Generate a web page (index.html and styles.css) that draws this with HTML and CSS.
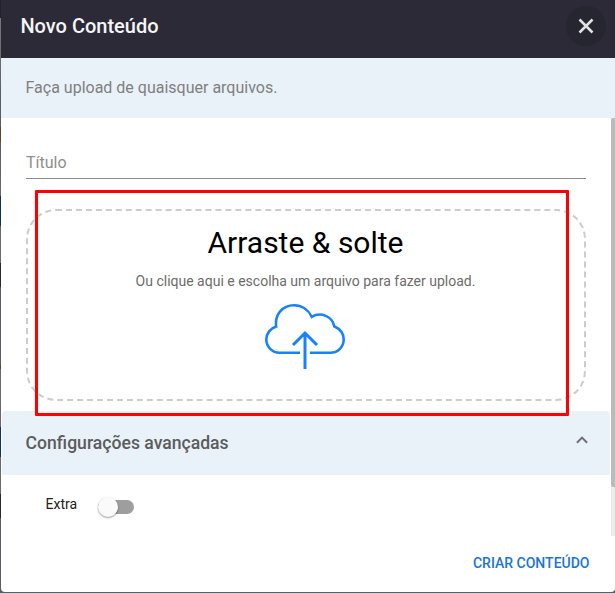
FILE: index.html
```html
<!DOCTYPE html>
<html lang="pt-BR">
<head>
<meta charset="UTF-8">
<meta name="viewport" content="width=device-width, initial-scale=1.0">
<title>Novo Conteúdo</title>
<link rel="stylesheet" href="styles.css">
</head>
<body>
<div class="dialog">
    <header class="dialog-header">
        <h1>Novo Conteúdo</h1>
        <button class="close-button" aria-label="Fechar">
            <svg width="24" height="24" viewBox="0 0 24 24"><path d="M5.500 5.500L18.500 18.500M18.500 5.500L5.500 18.500" fill="none" stroke="#e3e3e4" stroke-width="2.5"/></svg>
        </button>
    </header>
    <p class="subtitle">Faça upload de quaisquer arquivos.</p>

    <div class="dialog-body">
        <div class="content">
            <input class="title-input" type="text" placeholder="Título">
            <div class="upload">
                <div class="dropzone">
                    <h2>Arraste &amp; solte</h2>
                    <p>Ou clique aqui e escolha um arquivo para fazer upload.</p>
                    <svg class="cloud" width="80" height="66" viewBox="0 0 80 66" fill="none" stroke="#1881fd">
                        <path d="M35 48.700H14.500C7.200 48.700 1.300 42.700 1.300 35.500C1.300 29.300 5.500 24.300 11.200 22.600C9.500 10.500 17.500 1.300 29 1.300C37 1.300 43.500 6 46.700 12.800C56 7.500 67.500 12.500 69.200 22.300C75 25 78.700 29.500 78.700 35.500C78.700 42.700 73 48.700 65.500 48.700H45" stroke-width="2.600"/>
                        <path d="M40 65V29M28 41L40 29L52 41" stroke-width="3"/>
                    </svg>
                </div>
                <div class="highlight"></div>
            </div>
            <section class="advanced">
                <div class="advanced-header">
                    <h3>Configurações avançadas</h3>
                    <svg width="12" height="8" viewBox="0 0 12 8"><path d="M0.900 6.700L6 1.600L11.100 6.700" fill="none" stroke="#6d7175" stroke-width="2"/></svg>
                </div>
                <div class="option">
                    <span>Extra</span>
                    <div class="switch"><div class="switch-thumb"></div></div>
                </div>
            </section>
        </div>
        <div class="scrollbar"><div class="scrollbar-thumb"></div></div>
    </div>

    <footer class="dialog-footer">
        <button class="create-button">CRIAR CONTEÚDO</button>
    </footer>
</div>
</body>
</html>
```

FILE: styles.css
```css
* {
    box-sizing: border-box;
}

body {
    margin: 0;
    padding: 0 0 1px 1px;
    height: 593px;
    overflow: hidden;
    background: linear-gradient(#20222f 18px, #77777a 18px, #68696d 74px, #5b5d65 94px, #5b5d65 127px, #634621 127px, #634621 142px, #5b5d65 142px, #68696d 196px, #142f66 196px, #142f66 226px, #68696d 226px, #68696d 263px, #292929 263px, #292929 287px, #5b5d65 287px, #5b5d65 365px, #634621 365px, #634621 369px, #68696d 369px, #68696d 427px, #142f66 427px, #142f66 457px, #68696d 457px, #68696d 494px, #292929 494px, #292929 518px, #5b5d65 518px);
    font-family: Roboto, Arial, sans-serif;
}

h1, h2, h3, p {
    margin: 0;
}

button {
    border: none;
    padding: 0;
    background: none;
    font-family: inherit;
    cursor: pointer;
}

svg {
    display: block;
}

.dialog {
    display: flex;
    flex-direction: column;
    height: 592px;
    background-color: #fff;
    border-radius: 0 0 4px 4px;
    overflow: hidden;
}

.dialog-header {
    display: flex;
    justify-content: space-between;
    align-items: center;
    flex: 0 0 58px;
    padding: 0 9px 6px 19.4px;
    background-color: #2b2a36;
}

.dialog-header h1 {
    font-size: 20px;
    font-weight: 500;
    line-height: 24px;
    color: #f5f5f5;
}

.close-button {
    display: flex;
    justify-content: center;
    align-items: center;
    width: 40px;
    height: 40px;
    border-radius: 50%;
    background-color: #262630;
}

.subtitle {
    flex: 0 0 60px;
    padding-left: 24.5px;
    background-color: #e9f1f9;
    color: #808080;
    font-size: 16px;
    line-height: 60px;
}

.dialog-body {
    display: flex;
    flex: 0 0 418px;
}

.content {
    flex: 1;
    padding-left: 1px;
}

.title-input {
    display: block;
    width: 560px;
    height: 32px;
    margin: 29px 0 0 24px;
    padding: 0;
    border: none;
    border-bottom: 1px solid #8c8c8c;
    outline: none;
    background: none;
    font-family: inherit;
    font-size: 16px;
}

.title-input::placeholder {
    color: #8e8e8e;
}

.upload {
    position: relative;
    padding: 30px 25px 10px 24px;
}

.dropzone {
    display: flex;
    flex-direction: column;
    align-items: center;
    width: 560px;
    height: 192px;
    padding: 14px 2px 0 0;
    border: 2px dashed #ccc;
    border-radius: 30px;
}

.dropzone h2 {
    padding-left: 1px;
    font-size: 30px;
    font-weight: 400;
    line-height: 36px;
    color: #000;
}

.dropzone p {
    margin-top: 10px;
    padding-left: 1px;
    font-size: 14px;
    line-height: 20px;
    color: #6c6c6c;
}

.cloud {
    margin-top: 13px;
}

/* red frame over the drop area */
.highlight {
    position: absolute;
    top: 11px;
    left: 33px;
    width: 534px;
    height: 226px;
    border: 3px solid #f00;
    border-radius: 1px;
}

.advanced-header {
    display: flex;
    justify-content: space-between;
    align-items: center;
    width: 608px;
    height: 64px;
    padding: 0 22px 0 23.6px;
    background-color: #e9f1f9;
    border-radius: 4px 4px 0 0;
}

.advanced-header h3 {
    font-size: 17.6px;
    font-weight: 500;
    line-height: 22px;
    color: #5c5c5c;
}

.advanced-header svg {
    margin-bottom: 7px;
}

.option {
    display: flex;
    padding: 19px 0 0 43.5px;
    font-size: 14px;
    line-height: 20px;
    color: #212121;
}

.switch {
    width: 36px;
    height: 14px;
    margin: 6px 0 0 21px;
    border-radius: 7px;
    background-color: #9e9e9e;
}

.switch-thumb {
    width: 20px;
    height: 20px;
    margin-top: -3px;
    border-radius: 50%;
    background-color: #fafafa;
    box-shadow: 0 1px 2px rgba(0, 0, 0, 0.4);
}

.scrollbar {
    width: 4px;
    background-color: #ececec;
}

.scrollbar-thumb {
    height: 369px;
    background-color: #bbb;
    border-radius: 2px 0 0 2px;
}

.dialog-footer {
    display: flex;
    justify-content: flex-end;
    align-items: center;
    flex: 1;
    padding: 0 25.5px 2px 0;
}

.create-button {
    font-size: 14px;
    font-weight: 500;
    line-height: 20px;
    color: #1976d2;
}
```
